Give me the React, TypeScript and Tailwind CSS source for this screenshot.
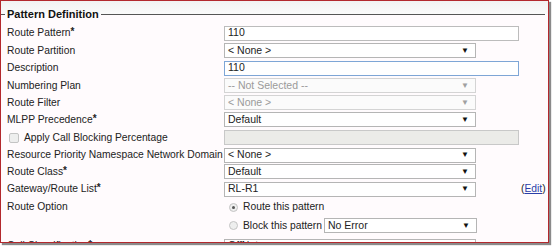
import React from "react";

const font = { fontFamily: '"Liberation Sans", Arial, sans-serif' };

function Star() {
  return <sup className="relative top-[-1px] text-[10px] font-bold">*</sup>;
}

function Arrow({ dim }: { dim?: boolean }) {
  return <span className={`text-[8px] ${dim ? "text-[#a0a0a0]" : "text-[#111]"}`}>▼</span>;
}

function Select({ value, dim, w = "w-[252px]" }: { value: string; dim?: boolean; w?: string }) {
  return (
    <div
      className={`${w} h-[15px] flex items-center justify-between pl-[3px] pr-[6px] border text-[10.5px] ${
        dim ? "border-[#d4d4d4] bg-[#fbfbfb] text-[#9a9a9a]" : "border-[#b5b5b5] bg-white text-[#222]"
      }`}
    >
      <span>{value}</span>
      <Arrow dim={dim} />
    </div>
  );
}

function Input({ value, focus, disabled }: { value?: string; focus?: boolean; disabled?: boolean }) {
  return (
    <div
      className={`w-[295px] h-[15px] flex items-center pl-[3px] border text-[10.5px] text-[#222] ${
        focus ? "border-[#7ea6d6] bg-white" : disabled ? "border-[#c8c8c8] bg-[#ebebe8]" : "border-[#bcbcbc] bg-white"
      }`}
    >
      {value}
    </div>
  );
}

function Row({ h, label, children }: { h: string; label: React.ReactNode; children?: React.ReactNode }) {
  return (
    <div className={`flex items-center ${h}`}>
      <div className="w-[217px] shrink-0 text-[10.3px] text-[#222] whitespace-nowrap">{label}</div>
      <div className="flex items-center">{children}</div>
    </div>
  );
}

function Radio({ checked }: { checked?: boolean }) {
  return (
    <span className="w-[9px] h-[9px] rounded-full border border-[#c4c4c4] bg-[#eeeeee] flex items-center justify-center">
      {checked && <span className="w-[3px] h-[3px] rounded-full bg-[#555]" />}
    </span>
  );
}

export default function App() {
  return (
    <div className="w-[554px] h-[246px] bg-white overflow-hidden" style={font}>
      <div className="w-[549px] h-[243px] border border-[#b3282d] bg-[#fffbfd] overflow-hidden shadow-[2px_2px_1px_#8a8a8a]">
        <div className="h-[13px] bg-gradient-to-b from-[#f2f2f2] to-[#fafafa]" />
        <div className="flex items-center h-[4px] -mt-[2px]">
          <div className="w-[4px] h-px bg-[#555]" />
          <div className="px-[2px] text-[11px] font-bold text-[#111] leading-none">Pattern Definition</div>
          <div className="flex-1 h-px bg-[#555] mr-[3px]" />
        </div>
        <div className="pl-[6px] pt-[8px]">
          <Row h="h-[18px]" label={<>Route Pattern<Star /></>}>
            <Input value="110" />
          </Row>
          <Row h="h-[17px]" label="Route Partition">
            <Select value="< None >" />
          </Row>
          <Row h="h-[18px]" label="Description">
            <Input value="110" focus />
          </Row>
          <Row h="h-[17px]" label="Numbering Plan">
            <Select value="-- Not Selected --" dim />
          </Row>
          <Row h="h-[17px]" label="Route Filter">
            <Select value="< None >" dim />
          </Row>
          <Row h="h-[17px]" label={<>MLPP Precedence<Star /></>}>
            <Select value="Default" />
          </Row>
          <Row
            h="h-[19px]"
            label={
              <span className="flex items-center gap-[5px] pl-[2px]">
                <span className="w-[10px] h-[10px] rounded-[2px] border border-[#c4c4c4] bg-[#eeeeee]" />
                Apply Call Blocking Percentage
              </span>
            }
          >
            <Input disabled />
          </Row>
          <Row h="h-[16px]" label="Resource Priority Namespace Network Domain">
            <Select value="< None >" />
          </Row>
          <Row h="h-[17px]" label={<>Route Class<Star /></>}>
            <Select value="Default" />
          </Row>
          <Row h="h-[18px]" label={<>Gateway/Route List<Star /></>}>
            <Select value="RL-R1" />
            <span className="ml-[45px] text-[10.3px] text-[#222]">
              (<span className="text-[#2a3ea8] underline">Edit</span>)
            </span>
          </Row>
          <Row h="h-[18px]" label="Route Option">
            <span className="flex items-center gap-[5px] pl-[5px] text-[10.3px] text-[#222]">
              <Radio checked />
              Route this pattern
            </span>
          </Row>
          <Row h="h-[19px]" label="">
            <span className="flex items-center gap-[5px] pl-[5px] text-[10.3px] text-[#222]">
              <Radio />
              Block this pattern
            </span>
            <span className="ml-[2px]">
              <Select value="No Error" w="w-[153px]" />
            </span>
          </Row>
          <div className="mt-[2px]">
            <Row h="h-[18px]" label={<>Call Classification<Star /></>}>
              <Select value="OffNet" />
            </Row>
          </div>
        </div>
      </div>
    </div>
  );
}
